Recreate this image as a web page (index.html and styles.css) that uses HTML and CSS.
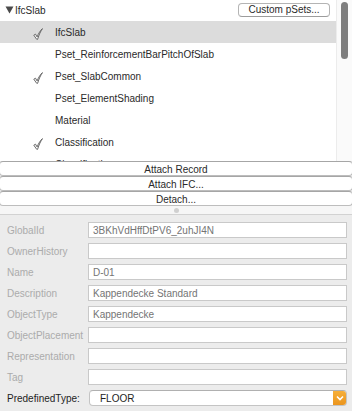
FILE: index.html
```html
<!DOCTYPE html>
<html lang="en">
<head>
  <meta charset="UTF-8">
  <title>IfcSlab Properties</title>
  <link rel="stylesheet" href="styles.css">
</head>
<body>

  <div class="top">
    <div class="list-area">
      <div class="header">
        <svg class="caret" width="9" height="8" viewBox="0 0 9 8"><path d="M0.5 0.5 L8.5 0.5 L4.5 7.5 Z" fill="#4a4a4a"/></svg>
        <span class="title">IfcSlab</span>
        <button class="pset-btn">Custom pSets...</button>
      </div>
      <div class="row selected">
        <span class="check"><svg width="10" height="12" viewBox="0 0 10 12"><path d="M0.8 7.2 L2.5 6.2 L4.1 8.9 C5.5 5.4 7.4 2.4 9.5 0.6 C7.7 3.1 6 6.6 4.6 11.3 L3.7 11.3 Z" fill="#fff" stroke="#5a5a5a" stroke-width="0.9" stroke-linejoin="round"/></svg></span>
        <span>IfcSlab</span>
      </div>
      <div class="row"><span class="check"></span><span>Pset_ReinforcementBarPitchOfSlab</span></div>
      <div class="row">
        <span class="check"><svg width="10" height="12" viewBox="0 0 10 12"><path d="M0.8 7.2 L2.5 6.2 L4.1 8.9 C5.5 5.4 7.4 2.4 9.5 0.6 C7.7 3.1 6 6.6 4.6 11.3 L3.7 11.3 Z" fill="#fff" stroke="#5a5a5a" stroke-width="0.9" stroke-linejoin="round"/></svg></span>
        <span>Pset_SlabCommon</span>
      </div>
      <div class="row"><span class="check"></span><span>Pset_ElementShading</span></div>
      <div class="row"><span class="check"></span><span>Material</span></div>
      <div class="row">
        <span class="check"><svg width="10" height="12" viewBox="0 0 10 12"><path d="M0.8 7.2 L2.5 6.2 L4.1 8.9 C5.5 5.4 7.4 2.4 9.5 0.6 C7.7 3.1 6 6.6 4.6 11.3 L3.7 11.3 Z" fill="#fff" stroke="#5a5a5a" stroke-width="0.9" stroke-linejoin="round"/></svg></span>
        <span>Classification</span>
      </div>
      <div class="row"><span class="check"></span><span>Classification</span></div>
    </div>
    <div class="scrollbar"><div class="thumb"></div></div>
  </div>

  <div class="actions">
    <button class="wide-btn">Attach Record</button>
    <button class="wide-btn">Attach IFC...</button>
    <button class="wide-btn">Detach...</button>
  </div>

  <div class="splitter"><span class="dot"></span></div>

  <div class="panel">
    <div class="field-row"><label>GlobalId</label><div class="field">3BKhVdHffDtPV6_2uhJI4N</div></div>
    <div class="field-row"><label>OwnerHistory</label><div class="field"></div></div>
    <div class="field-row"><label>Name</label><div class="field">D-01</div></div>
    <div class="field-row"><label>Description</label><div class="field">Kappendecke Standard</div></div>
    <div class="field-row"><label>ObjectType</label><div class="field">Kappendecke</div></div>
    <div class="field-row"><label>ObjectPlacement</label><div class="field"></div></div>
    <div class="field-row"><label>Representation</label><div class="field"></div></div>
    <div class="field-row"><label>Tag</label><div class="field"></div></div>
    <div class="field-row">
      <label class="active">PredefinedType:</label>
      <div class="popup">
        <span class="popup-text">FLOOR</span>
        <span class="popup-arrow"><svg width="8" height="6" viewBox="0 0 8 6"><path d="M1 1.5 L4 4.5 L7 1.5" fill="none" stroke="#fff" stroke-width="1.6"/></svg></span>
      </div>
    </div>
  </div>

</body>
</html>
```

FILE: styles.css
```css
* {
  box-sizing: border-box;
}

body {
  margin: 0;
  width: 352px;
  height: 411px;
  overflow: hidden;
  font-family: "Liberation Sans", Arial, sans-serif;
  font-size: 10px;
  color: #2a2a2a;
  background-color: #ececec;
}

.top {
  display: flex;
  height: 161px;
  background-color: #fff;
  overflow: hidden;
}

.list-area {
  flex: 1;
  overflow: hidden;
}

.header {
  display: flex;
  align-items: center;
  height: 21px;
  padding-left: 5px;
  padding-right: 6px;
}

.caret {
  margin-right: 1px;
  margin-top: -1px;
}

.title {
  flex: 1;
}

.pset-btn {
  height: 14px;
  width: 92px;
  padding: 0;
  font-family: inherit;
  font-size: 10px;
  color: #2a2a2a;
  background-color: #fff;
  border: 1px solid #b4b4b4;
  border-bottom-color: #9c9c9c;
  border-radius: 4px;
  margin-top: -2px;
}

.row {
  display: flex;
  align-items: center;
  height: 22px;
  padding-left: 33px;
}

.row.selected {
  background-color: #dcdcdc;
}

.check {
  width: 22px;
  height: 12px;
  display: flex;
  margin-top: 3px;
}

.scrollbar {
  width: 16px;
  border-left: 1px solid #ececec;
  background-color: #fafafa;
  padding: 2px 0 0 4px;
}

.thumb {
  width: 7px;
  height: 57px;
  border-radius: 4px;
  background-color: #7e7e7e;
}

.actions {
  display: flex;
  flex-direction: column;
  background-color: #f4f4f4;
}

.wide-btn {
  height: 15px;
  margin: 0 -1px;
  padding: 2px 0 0;
  font-family: inherit;
  font-size: 10px;
  color: #2a2a2a;
  background-color: #fff;
  border: 1px solid #bdbdbd;
  border-top-color: #a6a6a6;
  border-radius: 4px;
}

.splitter {
  display: flex;
  justify-content: center;
  align-items: center;
  height: 9px;
  background-color: #f6f6f6;
  border-bottom: 1px solid #d2d2d2;
}

.dot {
  width: 5px;
  height: 5px;
  border-radius: 50%;
  background-color: #d0d0d0;
}

.panel {
  padding: 7px 5px 0 7px;
  display: flex;
  flex-direction: column;
  gap: 5px;
}

.field-row {
  display: flex;
  align-items: center;
  height: 16px;
}

.field-row label {
  width: 81px;
  color: #ababab;
}

.field-row label.active {
  color: #1e1e1e;
}

.field {
  flex: 1;
  height: 16px;
  padding: 1px 4px 0;
  line-height: 13px;
  color: #747474;
  background-color: #fff;
  border: 1px solid #c9c9c9;
}

.popup {
  flex: 1;
  display: flex;
  align-items: center;
  height: 16px;
  margin-left: 1px;
  background-color: #fff;
  border: 1px solid #c4c4c4;
  border-top-color: #b0b0b0;
  border-radius: 4px;
  overflow: hidden;
}

.popup-text {
  flex: 1;
  padding-left: 10px;
  color: #1e1e1e;
}

.popup-arrow {
  width: 13px;
  height: 16px;
  margin-top: -1px;
  display: flex;
  justify-content: center;
  align-items: center;
  background: linear-gradient(#f7b13c, #ea931c);
}
```
